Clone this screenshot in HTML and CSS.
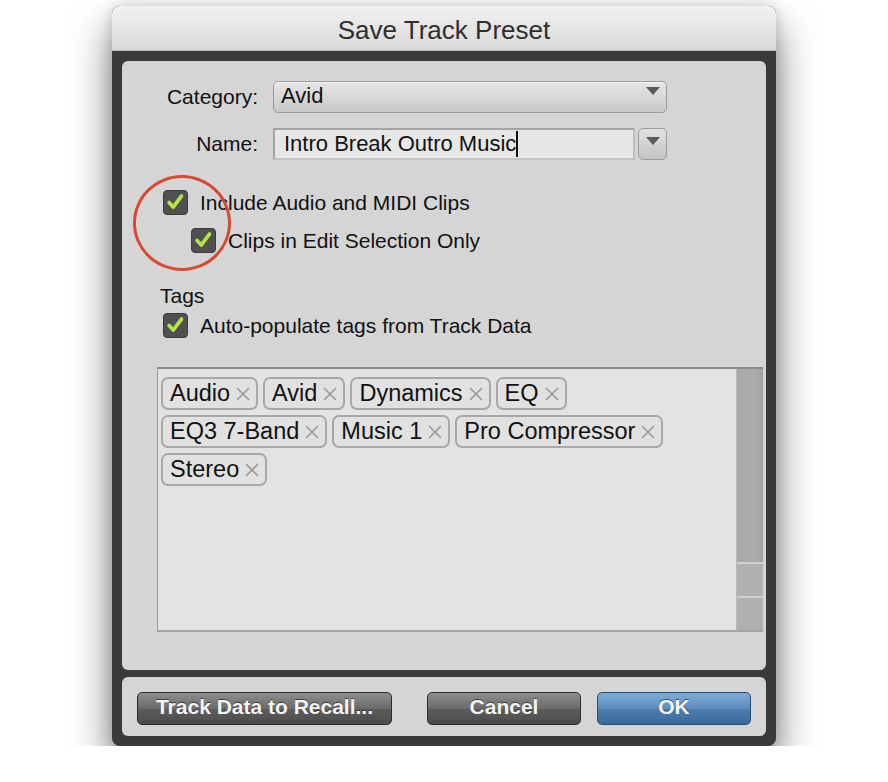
FILE: index.html
```html
<!DOCTYPE html>
<html lang="en">
<head>
  <meta charset="UTF-8">
  <title>Save Track Preset</title>
  <link rel="stylesheet" href="styles.css">
</head>
<body>
  <div class="window">
    <div class="titlebar">Save Track Preset</div>
    <div class="frame">
      <div class="panel">
        <div class="form">
          <label class="label">Category:</label>
          <div class="select">
            <span>Avid</span>
            <span class="arrow"></span>
          </div>
          <label class="label">Name:</label>
          <div class="namefield">
            <div class="input">Intro Break Outro Music<span class="caret"></span></div>
            <div class="dropbtn"><span class="arrow"></span></div>
          </div>
        </div>

        <div class="check first">
          <span class="box"><svg viewBox="0 0 25 25"><polyline points="5.5,12.5 10,17.5 19,5.5"/></svg></span>
          <span>Include Audio and MIDI Clips</span>
        </div>
        <div class="check sub">
          <span class="box"><svg viewBox="0 0 25 25"><polyline points="5.5,12.5 10,17.5 19,5.5"/></svg></span>
          <span>Clips in Edit Selection Only</span>
        </div>

        <div class="section">Tags</div>
        <div class="check tagcheck">
          <span class="box"><svg viewBox="0 0 25 25"><polyline points="5.5,12.5 10,17.5 19,5.5"/></svg></span>
          <span>Auto-populate tags from Track Data</span>
        </div>

        <div class="tagbox">
          <div class="taglist">
            <span class="tag">Audio<svg viewBox="0 0 14 14"><path d="M1 1L13 13M13 1L1 13"/></svg></span>
            <span class="tag">Avid<svg viewBox="0 0 14 14"><path d="M1 1L13 13M13 1L1 13"/></svg></span>
            <span class="tag">Dynamics<svg viewBox="0 0 14 14"><path d="M1 1L13 13M13 1L1 13"/></svg></span>
            <span class="tag">EQ<svg viewBox="0 0 14 14"><path d="M1 1L13 13M13 1L1 13"/></svg></span>
            <span class="tag">EQ3 7-Band<svg viewBox="0 0 14 14"><path d="M1 1L13 13M13 1L1 13"/></svg></span>
            <span class="tag">Music 1<svg viewBox="0 0 14 14"><path d="M1 1L13 13M13 1L1 13"/></svg></span>
            <span class="tag">Pro Compressor<svg viewBox="0 0 14 14"><path d="M1 1L13 13M13 1L1 13"/></svg></span>
            <span class="tag">Stereo<svg viewBox="0 0 14 14"><path d="M1 1L13 13M13 1L1 13"/></svg></span>
          </div>
          <div class="scrollbar">
            <div class="track"></div>
            <div class="step"></div>
            <div class="step"></div>
          </div>
        </div>

        <!-- annotation drawn over the checkboxes -->
        <div class="ring"></div>
      </div>

      <div class="footer">
        <button class="btn wide">Track Data to Recall...</button>
        <div class="spacer"></div>
        <button class="btn">Cancel</button>
        <button class="btn ok">OK</button>
      </div>
    </div>
  </div>
</body>
</html>
```

FILE: styles.css
```css
body {
  margin: 0;
  background: #fff;
  font-family: "Liberation Sans", Arial, sans-serif;
}

.window {
  width: 664px;
  margin: 6px 0 0 112px;
  background: #3a3a3a;
  border-radius: 8px;
  box-shadow: 0 22px 40px rgba(0, 0, 0, 0.55), 0 0 14px rgba(0, 0, 0, 0.15);
}

.titlebar {
  height: 44px;
  line-height: 48px;
  text-align: center;
  font-size: 26px;
  color: #2e2e2e;
  background: linear-gradient(#f1f1f1, #d9d9d9);
  border-radius: 8px 8px 0 0;
  border-bottom: 1px solid #b5b5b5;
}

.frame {
  padding: 10px;
  display: flex;
  flex-direction: column;
  gap: 7px;
}

.panel {
  position: relative;
  height: 609px;
  box-sizing: border-box;
  padding-top: 20px;
  background: #d5d5d5;
  border-radius: 6px;
}

.form {
  display: grid;
  grid-template-columns: 136px 394px;
  column-gap: 15px;
  row-gap: 15px;
  align-items: center;
}

.label {
  text-align: right;
  font-size: 21px;
  color: #111;
}

.select {
  height: 32px;
  box-sizing: border-box;
  display: flex;
  align-items: center;
  justify-content: space-between;
  padding: 0 6px 2px 7px;
  font-size: 22px;
  color: #111;
  background: linear-gradient(#e6e6e6, #c9c9c9);
  border: 1px solid #9c9c9c;
  border-radius: 5px;
  box-shadow: inset 0 1px 0 #f4f4f4;
}

.arrow {
  width: 0;
  height: 0;
  border-left: 7px solid transparent;
  border-right: 7px solid transparent;
  border-top: 8px solid #5a5a5a;
  margin-bottom: 10px;
}

.namefield {
  display: flex;
  gap: 3px;
}

.input {
  width: 362px;
  height: 32px;
  box-sizing: border-box;
  padding: 0 9px;
  display: flex;
  align-items: center;
  font-size: 22px;
  color: #111;
  background: #e7e7e7;
  border: 2px solid #a3a3a3;
  border-right-color: #bdbdbd;
  border-bottom-color: #c4c4c4;
}

.caret {
  width: 2px;
  height: 26px;
  background: #111;
}

.dropbtn {
  width: 29px;
  height: 32px;
  box-sizing: border-box;
  display: flex;
  align-items: center;
  justify-content: center;
  background: linear-gradient(#e2e2e2, #c3c3c3);
  border: 1px solid #9c9c9c;
  border-radius: 5px;
}

.dropbtn .arrow {
  margin-bottom: 6px;
}

.check {
  display: flex;
  align-items: center;
  gap: 12px;
  height: 25px;
  font-size: 21px;
  color: #111;
}

.check.first {
  margin: 30px 0 0 41px;
}

.check.sub {
  margin: 13px 0 0 69px;
}

.check.tagcheck {
  margin: 5px 0 0 41px;
}

.box {
  width: 25px;
  height: 25px;
  box-sizing: border-box;
  background: #505050;
  border: 1px solid #3c3c3c;
  border-radius: 4px;
}

.box svg {
  display: block;
  width: 23px;
  height: 23px;
}

.box polyline {
  fill: none;
  stroke: #b6e347;
  stroke-width: 4;
  stroke-linecap: round;
  stroke-linejoin: round;
}

.section {
  margin: 31px 0 0 38px;
  font-size: 21px;
  line-height: 24px;
  color: #111;
}

.tagbox {
  margin: 29px 3px 0 35px;
  height: 265px;
  box-sizing: border-box;
  display: flex;
  background: #e3e3e3;
  border-top: 2px solid #8b8b8b;
  border-left: 1px solid #9a9a9a;
  border-bottom: 2px solid #a5a5a5;
}

.taglist {
  flex: 1;
  padding: 8px 40px 8px 3px;
  display: flex;
  flex-wrap: wrap;
  align-content: flex-start;
  gap: 5px 5px;
}

.tag {
  height: 33px;
  box-sizing: border-box;
  display: flex;
  align-items: center;
  gap: 6px;
  padding: 0 5px 0 7px;
  font-size: 23.5px;
  color: #111;
  background: #e1e1e1;
  border: 2px solid #a8a8a8;
  border-radius: 7px;
}

.tag svg {
  width: 14px;
  height: 14px;
  margin-right: 1px;
}

.tag path {
  stroke: #9a9a9a;
  stroke-width: 1.6;
  fill: none;
}

.scrollbar {
  width: 26px;
  display: flex;
  flex-direction: column;
  border-left: 1px solid #b9b9b9;
}

.track {
  flex: 1;
  background: linear-gradient(90deg, #a9a9a9, #ababab 70%, #a4a4a4);
}

.step {
  height: 32px;
  background: #b0b0b0;
  border-top: 2px solid #cfcfcf;
}

.ring {
  position: absolute;
  left: 11px;
  top: 114px;
  width: 92px;
  height: 90px;
  border: 3px solid #d64a30;
  border-radius: 50%;
}

.footer {
  height: 59px;
  box-sizing: border-box;
  padding: 3px 15px 0;
  display: flex;
  align-items: center;
  gap: 16px;
  background: #d5d5d5;
  border-radius: 6px;
}

.spacer {
  flex: 1;
}

.btn {
  width: 154px;
  height: 33px;
  padding: 0 0 2px;
  font-family: "Liberation Sans", Arial, sans-serif;
  font-size: 21px;
  font-weight: bold;
  color: #f4f4f4;
  text-shadow: 0 -1px 0 rgba(0, 0, 0, 0.5);
  background: linear-gradient(#8e8e8e, #6a6a6a 50%, #5c5c5c 52%, #4c4c4c);
  border: 1px solid #2c2c2c;
  border-radius: 5px;
}

.btn.wide {
  width: 255px;
}

.btn.ok {
  background: linear-gradient(#80abd6, #5b8cbd 50%, #4c7eb0 52%, #3b6a9a);
  border-color: #284d73;
}
```
